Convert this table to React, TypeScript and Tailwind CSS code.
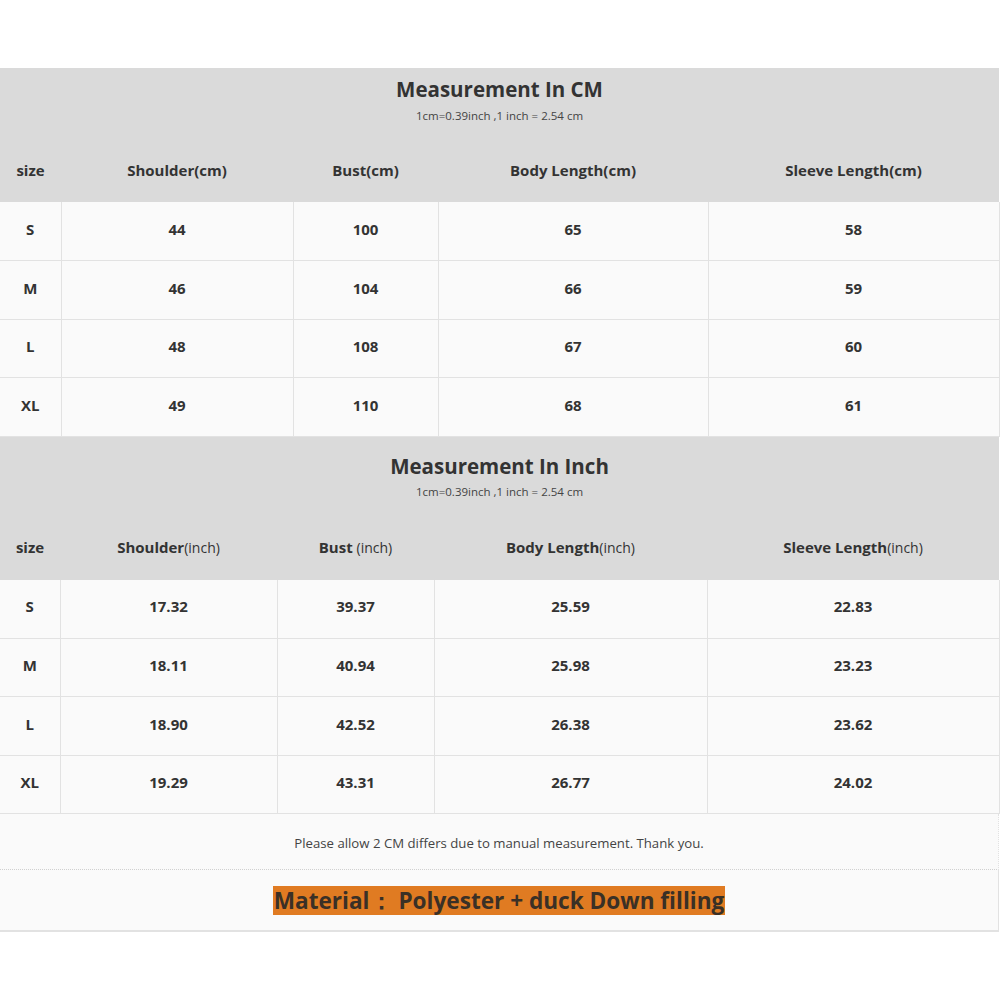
import React from 'react';

const font = { fontFamily: '"Open Sans", "Noto Sans", sans-serif' };

interface Section {
  title: string;
  unit: 'cm' | 'inch';
  cols: number[];
  heads: string[];
  rows: string[][];
}

const sections: Section[] = [
  {
    title: 'Measurement In CM',
    unit: 'cm',
    cols: [61, 232, 145, 270, 291],
    heads: ['Shoulder', 'Bust', 'Body Length', 'Sleeve Length'],
    rows: [
      ['S', '44', '100', '65', '58'],
      ['M', '46', '104', '66', '59'],
      ['L', '48', '108', '67', '60'],
      ['XL', '49', '110', '68', '61'],
    ],
  },
  {
    title: 'Measurement In Inch',
    unit: 'inch',
    cols: [60, 217, 157, 273, 292],
    heads: ['Shoulder', 'Bust ', 'Body Length', 'Sleeve Length'],
    rows: [
      ['S', '17.32', '39.37', '25.59', '22.83'],
      ['M', '18.11', '40.94', '25.98', '23.23'],
      ['L', '18.90', '42.52', '26.38', '23.62'],
      ['XL', '19.29', '43.31', '26.77', '24.02'],
    ],
  },
];

function SizeTable({ s }: { s: Section }) {
  return (
    <table className="w-[999px] table-fixed border-collapse text-[#333]">
      <colgroup>
        {s.cols.map((w, i) => (
          <col key={i} style={{ width: w }} />
        ))}
      </colgroup>
      <thead>
        <tr className="bg-[#dadada]">
          <th colSpan={5} className={s.unit === 'cm' ? 'h-[74px] pt-[7px] text-center align-top' : 'h-[83px] pt-[15px] text-center align-top'}>
            <div className="text-[20.5px] font-bold leading-[28px]">{s.title}</div>
            <div className={s.unit === 'cm' ? 'mt-[6px] text-[11.5px] font-normal leading-[14px] text-[#444]' : 'mt-[5px] text-[11.5px] font-normal leading-[14px] text-[#444]'}>
              1cm=0.39inch ,1 inch = 2.54 cm
            </div>
          </th>
        </tr>
        <tr className="h-[60px] bg-[#dadada]">
          <th className="pb-[4px] text-center text-[15px] font-bold">size</th>
          {s.heads.map((h) => (
            <th key={h} className="pb-[4px] text-center text-[15px] font-bold">
              {h}
              {s.unit === 'cm' ? '(cm)' : <span className="text-[14px] font-normal">(inch)</span>}
            </th>
          ))}
        </tr>
      </thead>
      <tbody>
        {s.rows.map((r) => (
          <tr key={r[0]} className="h-[58.5px] bg-[#fafafa]">
            {r.map((c, i) => (
              <td
                key={i}
                className="border-b border-r border-[#e2e2e2] pb-[4px] text-center text-[15px] font-bold"
              >
                {c}
              </td>
            ))}
          </tr>
        ))}
      </tbody>
    </table>
  );
}

export default function App() {
  return (
    <div className="min-h-[1000px] bg-white pt-[68px]" style={font}>
      <div className="w-[999px]">
        {sections.map((s) => (
          <SizeTable key={s.title} s={s} />
        ))}
        <div className="flex h-[56px] items-center justify-center border-b border-dotted border-r border-r-[#e2e2e2] border-b-[#d0d0d0] bg-[#fafafa] pt-[4px] text-[13.2px] text-[#444]">
          Please allow 2 CM differs due to manual measurement. Thank you.
        </div>
        <div className="flex h-[62px] items-center justify-center border-b-2 border-r border-[#e2e2e2] bg-[#fafafa]">
          <span className="bg-[#e07b22] px-[1px] text-[22.6px] font-bold leading-[29px] text-[#3a3026]">
            Material：&nbsp;Polyester + duck Down filling
          </span>
        </div>
      </div>
    </div>
  );
}
